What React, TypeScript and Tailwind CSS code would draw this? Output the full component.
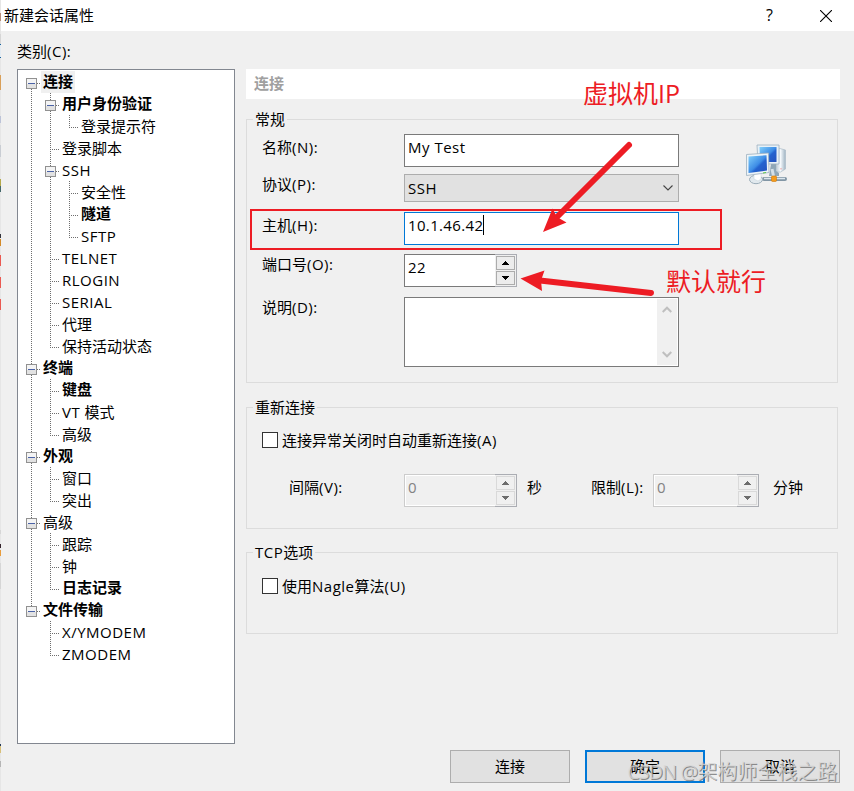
import React from "react";

type Guide = "blank" | "line" | "tee" | "end" | "box" | "boxFirst" | "boxLast";

interface Node {
  label: string;
  guides: Guide[];
  bold?: boolean;
  selected?: boolean;
}

const nodes: Node[] = [
  { label: "连接", guides: ["boxFirst"], bold: true, selected: true },
  { label: "用户身份验证", guides: ["line", "box"], bold: true },
  { label: "登录提示符", guides: ["line", "line", "end"] },
  { label: "登录脚本", guides: ["line", "tee"] },
  { label: "SSH", guides: ["line", "box"] },
  { label: "安全性", guides: ["line", "line", "tee"] },
  { label: "隧道", guides: ["line", "line", "tee"], bold: true },
  { label: "SFTP", guides: ["line", "line", "end"] },
  { label: "TELNET", guides: ["line", "tee"] },
  { label: "RLOGIN", guides: ["line", "tee"] },
  { label: "SERIAL", guides: ["line", "tee"] },
  { label: "代理", guides: ["line", "tee"] },
  { label: "保持活动状态", guides: ["line", "end"] },
  { label: "终端", guides: ["box"], bold: true },
  { label: "键盘", guides: ["line", "tee"], bold: true },
  { label: "VT 模式", guides: ["line", "tee"] },
  { label: "高级", guides: ["line", "end"] },
  { label: "外观", guides: ["box"], bold: true },
  { label: "窗口", guides: ["line", "tee"] },
  { label: "突出", guides: ["line", "end"] },
  { label: "高级", guides: ["box"] },
  { label: "跟踪", guides: ["line", "tee"] },
  { label: "钟", guides: ["line", "tee"] },
  { label: "日志记录", guides: ["line", "end"], bold: true },
  { label: "文件传输", guides: ["boxLast"], bold: true },
  { label: "X/YMODEM", guides: ["blank", "tee"] },
  { label: "ZMODEM", guides: ["blank", "end"] },
];

// Latin runs are set slightly wider than the Chinese ones
function Mixed({ text }: { text: string }) {
  const runs = text.match(/[\x20-\x7e]+|[^\x20-\x7e]+/g) ?? [];
  return (
    <span className="whitespace-pre">
      {runs.map((r, i) => (
        <span key={i} className={/^[\x20-\x7e]/.test(r) ? "tracking-[0.5px]" : ""}>
          {r}
        </span>
      ))}
    </span>
  );
}

function GuideCell({ kind }: { kind: Guide }) {
  const isBox = kind.startsWith("box");
  const top = kind === "boxFirst" ? 12 : 0;
  const bottom = kind === "end" || kind === "boxLast" ? 12 : 22;
  return (
    <svg className="h-[22px] w-[19px] shrink-0" viewBox="0 0 19 22" shapeRendering="crispEdges">
      {kind !== "blank" && (
        <line x1="9.5" x2="9.5" y1={top} y2={bottom} stroke="#6e6e6e" strokeDasharray="1 1" />
      )}
      {kind !== "blank" && kind !== "line" && (
        <line x1="9" x2="19" y1="12.5" y2="12.5" stroke="#6e6e6e" strokeDasharray="1 1" />
      )}
      {isBox && (
        <>
          <rect x="4.5" y="7.5" width="10" height="10" rx="1" fill="#f4f4f4" stroke="#919191" />
          <rect x="5" y="13" width="9" height="4" fill="#e2e2e2" />
          <line x1="6" x2="13" y1="12.5" y2="12.5" stroke="#4b63a7" />
        </>
      )}
    </svg>
  );
}

function Tree() {
  return (
    <div className="mt-[7px] flex h-[675px] w-[218px] flex-col border border-[#828790] bg-white pt-px pl-1">
      {nodes.map((n, i) => (
        <div key={i} className="flex h-[22px] shrink-0 items-center">
          {n.guides.map((g, j) => (
            <GuideCell key={j} kind={g} />
          ))}
          <span
            className={
              "flex h-[22px] items-center px-[2px] " +
              (n.bold ? "pb-[3px] font-bold " : "pb-px ") +
              (n.selected ? "bg-[#f0f0f0]" : "")
            }
          >
            <Mixed text={n.label} />
          </span>
        </div>
      ))}
    </div>
  );
}

function Group({ title, className, children }: { title: string; className: string; children: React.ReactNode }) {
  return (
    <div className={"w-[592px] shrink-0 border border-[#dcdcdc] " + className}>
      <div className="-mt-[11px] ml-[6px] flex h-5 w-fit items-center bg-[#f0f0f0] px-[2px]">
        <Mixed text={title} />
      </div>
      {children}
    </div>
  );
}

function Triangle({ down }: { down?: boolean }) {
  return (
    <svg className="h-[4px] w-[7px]" viewBox="0 0 7 4" fill="currentColor" shapeRendering="crispEdges">
      {down ? (
        <path d="M0 0h7v1H0zM1 1h5v1H1zM2 2h3v1H2zM3 3h1v1H3z" />
      ) : (
        <path d="M3 0h1v1H3zM2 1h3v1H2zM1 2h5v1H1zM0 3h7v1H0z" />
      )}
    </svg>
  );
}

function Spin({ value, disabled, className }: { value: string; disabled?: boolean; className: string }) {
  const btn =
    "flex h-[14px] w-[19px] items-center justify-center border " +
    (disabled ? "border-[#d9d9d9] bg-[#f0f0f0] text-[#6d6d6d]" : "border-[#acacac] bg-[#ececec] text-black");
  return (
    <div className={"flex h-[33px] shrink-0 " + className}>
      <div
        className={
          "flex-1 border border-r-0 pt-px pl-[3px] " +
          (disabled
            ? "border-[#cccccc] bg-[#f0f0f0] text-[#838383] shadow-[inset_1px_1px_0_#fff,inset_0_-1px_0_#fff]"
            : "border-[#7a7a7a] bg-white")
        }
      >
        <Mixed text={value} />
      </div>
      <div className="flex w-[22px] flex-col gap-px border border-l-0 border-[#abadb3] bg-[#f0f0f0] pt-px pl-px">
        <div className={btn}>
          <Triangle />
        </div>
        <div className={btn}>
          <Triangle down />
        </div>
      </div>
    </div>
  );
}

function Row({ label, className, pad, children }: { label: string; className: string; pad: string; children: React.ReactNode }) {
  return (
    <div className={"flex items-start " + className}>
      <div className={"w-[142px] shrink-0 leading-5 " + pad}>
        <Mixed text={label} />
      </div>
      {children}
    </div>
  );
}

function NetworkIcon() {
  return (
    <svg className="h-[44px] w-[44px]" viewBox="0 0 44 44">
      <defs>
        <linearGradient id="screen" x1="0" y1="0" x2="1" y2="1">
          <stop offset="0" stopColor="#82d0fb" />
          <stop offset="0.5" stopColor="#3e8de6" />
          <stop offset="0.6" stopColor="#2463cf" />
          <stop offset="1" stopColor="#2553bd" />
        </linearGradient>
        <linearGradient id="tower" x1="0" y1="0" x2="1" y2="0">
          <stop offset="0" stopColor="#b3c2ce" />
          <stop offset="0.5" stopColor="#f5f9fc" />
          <stop offset="1" stopColor="#9fb3c2" />
        </linearGradient>
      </defs>
      <path d="M32 6l7.500 2v19l-5 3h-5z" fill="url(#tower)" stroke="#aebdc8" strokeWidth=".7" />
      <path d="M25 22h5v7l3 2v3H23z" fill="#8fa7b8" />
      <path d="M11 3h22v19H12z" fill="#e8f1f7" stroke="#9db0bf" strokeWidth=".8" />
      <path d="M13.500 5h17v15H14z" fill="url(#screen)" />
      <path d="M18 37h21" stroke="#8296a5" strokeWidth="4" strokeLinecap="round" />
      <path d="M18 36.500h21" stroke="#dbe5ec" strokeWidth="1.500" />
      <path d="M26 27l1.500 7" stroke="#d4e0e8" strokeWidth="3" />
      <ellipse cx="10" cy="37.500" rx="6.500" ry="4.200" fill="#e1e9ee" stroke="#9badb9" />
      <path d="M8 31h7v6l-3 2-4-2z" fill="#fff" stroke="#c5d0d8" strokeWidth=".5" />
      <path d="M.5 12.500L22.500 11l.5 19.500L.5 33.500z" fill="#edf4f8" stroke="#9db0bf" strokeWidth=".8" />
      <path d="M2.500 14.500l18-1.200.5 15.200-18.500 2.500z" fill="url(#screen)" />
      <path d="M17 31l3-.5" stroke="#5cc747" strokeWidth="1" />
      <rect x="25.500" y="34" width="5" height="5.500" rx="1" fill="#f59a1b" stroke="#cf7a0c" strokeWidth=".6" />
      <path d="M35 26v1.500" stroke="#ef9a9a" />
    </svg>
  );
}

// Slivers of the window behind, visible along the left edge
const slivers = [
  { gap: "mt-[13px]", cls: "h-2 bg-[#b98e7a]" },
  { gap: "mt-[13px]", cls: "h-[10px] bg-[#d6d6d6]" },
  { gap: "mt-0", cls: "h-[14px] border-y border-[#15629e] bg-[#e3ebf2]" },
  { gap: "mt-[17px]", cls: "h-[15px] bg-[#d9a05a]" },
  { gap: "mt-[26px]", cls: "h-[7px] bg-[#bcc3d8]" },
  { gap: "mt-[22px]", cls: "h-3 bg-[#c9cdd3]" },
  { gap: "mt-[22px]", cls: "h-[7px] bg-[#b5a94a]" },
  { gap: "mt-0", cls: "h-[6px] bg-[#45686a]" },
  { gap: "mt-[42px]", cls: "h-[4px] bg-[#33333d]" },
  { gap: "mt-[1px]", cls: "h-[7px] bg-[#d38a28]" },
  { gap: "mt-[9px]", cls: "h-[11px] bg-[#ea5a52]" },
  { gap: "mt-[11px]", cls: "h-[11px] bg-[#ea5a52]" },
  { gap: "mt-[11px]", cls: "h-[11px] bg-[#ea5a52]" },
  { gap: "mt-[220px]", cls: "h-[4px] bg-[#d6d6d6]" },
  { gap: "mt-[10px]", cls: "h-[4px] bg-[#33232c]" },
  { gap: "mt-[2px]", cls: "h-[6px] bg-[#e89c3c]" },
  { gap: "mt-[7px]", cls: "h-[26px] bg-[#d6d6d6]" },
  { gap: "mt-[155px]", cls: "h-[2px] bg-[#23395b]" },
  { gap: "mt-0", cls: "h-[7px] bg-[#d8c07a]" },
  { gap: "mt-[8px]", cls: "h-[6px] bg-[#b5b5b5]" },
];

function CheckRow({ label, className }: { label: string; className: string }) {
  return (
    <div className={"ml-[15px] flex h-5 items-center gap-1 " + className}>
      <div className="h-4 w-4 border border-[#333] bg-white" />
      <Mixed text={label} />
    </div>
  );
}

export default function App() {
  const button = "flex h-[33px] w-[120px] items-center justify-center bg-[#e1e1e1] pb-[2px] ";
  return (
    <div className="relative flex h-[791px] w-[854px] overflow-hidden bg-[#f0f0f0] font-['Open_Sans','Noto_Sans_CJK_SC',sans-serif] text-[15px] leading-[22px] text-black">
      <div className="flex w-px shrink-0 flex-col bg-[#e6e6e6]">
        {slivers.map((s, i) => (
          <div key={i} className={"w-px shrink-0 " + s.gap + " " + s.cls} />
        ))}
      </div>

      <div className="flex flex-1 flex-col">
        <header className="flex h-[31px] shrink-0 items-center bg-white pl-[3px]">
          <span className="flex-1 pb-[2px]">新建会话属性</span>
          <span className="mr-[47px] pb-[2px] text-[16px]">?</span>
          <svg className="mr-[22px] h-3 w-3" viewBox="0 0 12 12" stroke="#000" strokeWidth="1.100">
            <path d="M0 0L12 12M12 0L0 12" />
          </svg>
        </header>

        <div className="flex flex-1">
          <aside className="ml-4 w-[218px] shrink-0 pt-[9px]">
            <div className="h-[22px]">
              <Mixed text="类别(C):" />
            </div>
            <Tree />
          </aside>

          <main className="ml-[11px] flex w-[594px] flex-col pt-[38px]">
            <div className="flex h-[30px] shrink-0 items-center bg-white pb-[2px] pl-2 font-bold text-[#a0a0a0]">连接</div>

            <Group title="常规" className="mt-5 h-[264px]">
              <div className="flex pt-[5px] pl-[15px]">
                <div className="w-[417px] shrink-0">
                  <Row label="名称(N):" className="h-[33px]" pad="pt-[3px]">
                    <div className="h-[33px] w-[275px] border border-[#7a7a7a] bg-white pt-px pl-[3px]">
                      <Mixed text="My Test" />
                    </div>
                  </Row>
                  <Row label="协议(P):" className="mt-[7px] h-[28px]" pad="pt-0">
                    <div className="flex h-[28px] w-[275px] items-center justify-between border border-[#adadad] bg-[#e1e1e1] pr-[5px] pl-[3px]">
                      <Mixed text="SSH" />
                      <svg className="h-[6px] w-[10px]" viewBox="0 0 10 6" fill="none" stroke="#444" strokeWidth="1.100">
                        <path d="M.5.500L5 5L9.500.500" />
                      </svg>
                    </div>
                  </Row>
                  <Row label="主机(H):" className="mt-[10px] h-[33px]" pad="pt-[3px]">
                    <div className="flex h-[33px] w-[275px] border border-[#0078d7] bg-white pt-px pl-[3px]">
                      <span className="tracking-[0.35px]">10.1.46.42</span>
                      <span className="mt-px h-5 w-px bg-black" />
                    </div>
                  </Row>
                  <Row label="端口号(O):" className="mt-[9px] h-[33px]" pad="pt-0">
                    <Spin value="22" className="w-[113px]" />
                  </Row>
                  <Row label="说明(D):" className="mt-[10px] h-[70px]" pad="pt-0">
                    <div className="flex h-[70px] w-[275px] justify-end border border-[#7a7a7a] bg-white p-px">
                      <div className="flex w-5 flex-col items-center justify-between bg-[#f0f0f0] py-[7px] pr-px text-[#bfbfbf]">
                        <svg className="h-[7px] w-[10px]" viewBox="0 0 10 7" fill="none" stroke="currentColor" strokeWidth="2">
                          <path d="M.7 6L5 1.700L9.300 6" />
                        </svg>
                        <svg className="h-[7px] w-[10px]" viewBox="0 0 10 7" fill="none" stroke="currentColor" strokeWidth="2">
                          <path d="M.7 1L5 5.300L9.300 1" />
                        </svg>
                      </div>
                    </div>
                  </Row>
                </div>
                <div className="ml-[67px] pt-2">
                  <NetworkIcon />
                </div>
              </div>
            </Group>

            <Group title="重新连接" className="mt-6 h-[122px]">
              <CheckRow label="连接异常关闭时自动重新连接(A)" className="mt-[13px]" />
              <div className="mt-6 ml-[42px] flex">
                <span className="w-[115px] pt-[2px]">
                  <Mixed text="间隔(V):" />
                </span>
                <Spin value="0" disabled className="w-[113px]" />
                <span className="ml-[10px] w-[64px] pt-[2px]">秒</span>
                <span className="w-[62px] pt-[2px]">
                  <Mixed text="限制(L):" />
                </span>
                <Spin value="0" disabled className="w-[106px]" />
                <span className="ml-[14px] pt-[2px]">分钟</span>
              </div>
            </Group>

            <Group title="TCP选项" className="mt-[23px] h-[82px]">
              <CheckRow label="使用Nagle算法(U)" className="mt-[14px]" />
            </Group>

            <footer className="mt-[116px] flex justify-end gap-[15px]">
              <div className={button + "border border-[#adadad]"}>连接</div>
              <div className={button + "border-2 border-[#0078d7]"}>确定</div>
              <div className={button + "border border-[#adadad]"}>取消</div>
            </footer>
          </main>
        </div>
      </div>

      {/* Annotations drawn over the dialog */}
      <div className="absolute top-[209px] left-[250px] h-[41px] w-[472px] border-2 border-[#ed1c24]" />
      <svg className="absolute top-0 left-0 h-[791px] w-[854px]" viewBox="0 0 854 791" fill="#ed1c24" stroke="#ed1c24">
        <path d="M629 145L556 218" strokeWidth="6" strokeLinecap="round" />
        <path d="M543 232L552.500 208.500L557 217L566.500 222.500Z" stroke="none" />
        <path d="M651 293L540 280.500" strokeWidth="6" strokeLinecap="round" />
        <path d="M520.500 278.500L544.500 270.500L541 280.500L542 291Z" stroke="none" />
      </svg>
      <div className="absolute top-[75px] left-[583px] text-[25px] leading-9 whitespace-nowrap text-[#ed1c24]">虚拟机IP</div>
      <div className="absolute top-[263px] left-[666px] text-[25px] leading-9 whitespace-nowrap text-[#ed1c24]">默认就行</div>
      <div className="absolute top-[757px] left-[627px] text-[20px] leading-[30px] whitespace-nowrap text-[#d8d8d8]/80 [text-shadow:1px_1px_0_rgb(110_110_110/0.75)]">
        <span className="tracking-[-1px]">CSDN @</span>架构师全栈之路
      </div>
    </div>
  );
}
